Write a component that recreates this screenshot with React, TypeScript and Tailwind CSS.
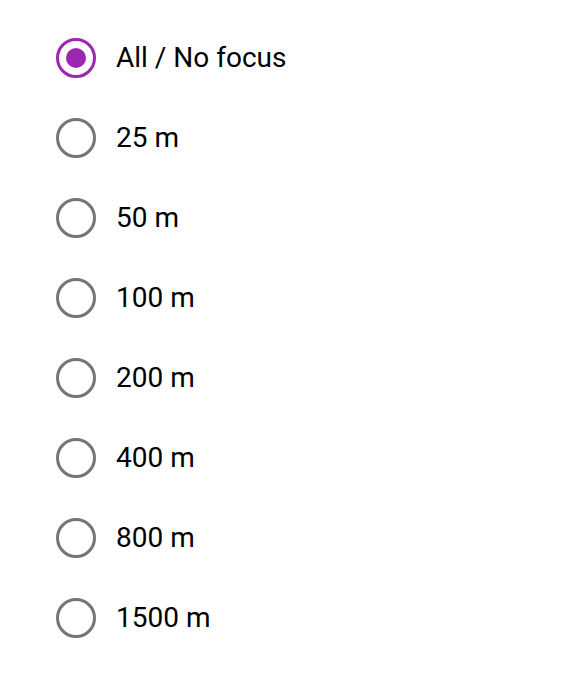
import React, { useState } from 'react';

const options = ['All / No focus', '25 m', '50 m', '100 m', '200 m', '400 m', '800 m', '1500 m'];

const App: React.FC = () => {
  const [selected, setSelected] = useState(options[0]);

  return (
    <div className="min-h-screen bg-white pt-[18px] pl-[56px]" style={{ fontFamily: 'Roboto, sans-serif' }}>
      {options.map((opt) => {
        const active = opt === selected;
        return (
          <label key={opt} className="flex h-20 items-center gap-5 cursor-pointer" onClick={() => setSelected(opt)}>
            <span
              className={
                active
                  ? 'flex h-10 w-10 items-center justify-center rounded-full border-[3px] border-[#9c27b0]'
                  : 'flex h-10 w-10 items-center justify-center rounded-full border-[3px] border-[#757575]'
              }
            >
              {active && <span className="h-5 w-5 rounded-full bg-[#9c27b0]" />}
            </span>
            <span className="text-[28px] leading-none text-black">{opt}</span>
          </label>
        );
      })}
    </div>
  );
};

export default App;
